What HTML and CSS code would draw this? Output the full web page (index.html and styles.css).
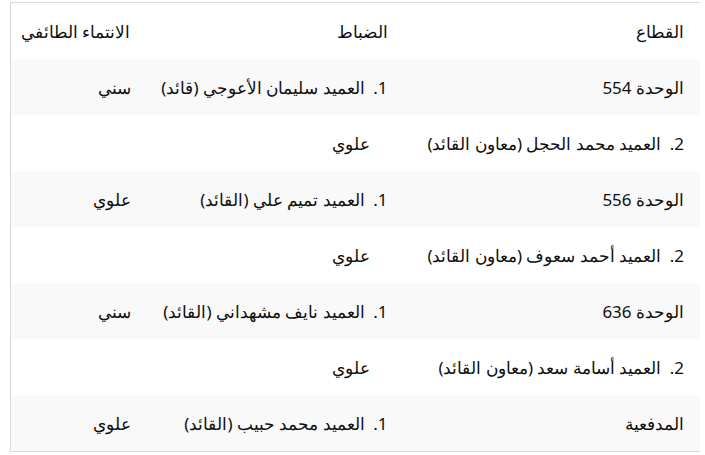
FILE: index.html
```html
<!DOCTYPE html>
<html lang="ar">
<head>
<meta charset="utf-8">
<title>جدول</title>
<link rel="stylesheet" href="styles.css">
</head>
<body>
<table class="grid" dir="rtl">
  <colgroup>
    <col class="c1"><col class="c2"><col class="c3">
  </colgroup>
  <thead>
    <tr><th>القطاع</th><th>الضباط</th><th>الانتماء الطائفي</th></tr>
  </thead>
  <tbody>
    <tr><td>الوحدة 554</td><td><span class="num">1.</span> العميد سليمان الأعوجي (قائد)</td><td>سني</td></tr>
    <tr><td><span class="num">2.</span> العميد محمد الحجل (معاون القائد)</td><td class="shift">علوي</td><td></td></tr>
    <tr><td>الوحدة 556</td><td><span class="num">1.</span> العميد تميم علي (القائد)</td><td>علوي</td></tr>
    <tr><td><span class="num">2.</span> العميد أحمد سعوف (معاون القائد)</td><td class="shift">علوي</td><td></td></tr>
    <tr><td>الوحدة 636</td><td><span class="num">1.</span> العميد نايف مشهداني (القائد)</td><td>سني</td></tr>
    <tr><td><span class="num">2.</span> العميد أسامة سعد (معاون القائد)</td><td class="shift">علوي</td><td></td></tr>
    <tr><td>المدفعية</td><td><span class="num">1.</span> العميد محمد حبيب (القائد)</td><td>علوي</td></tr>
  </tbody>
</table>
</body>
</html>
```

FILE: styles.css
```css
html, body {
  background: #ffffff;
}
body {
  margin: 2px 5px 0 10px;
  font-family: "Noto Sans", sans-serif;
  font-size: 17px;
  color: #0f0f0f;
}
.grid {
  width: 690px;
  table-layout: fixed;
  border-collapse: collapse;
  border: 1px solid #d9d9d9;
}
.grid .c1 { width: 297px; }
.grid .c2 { width: 257px; }
.grid .c3 { width: 136px; }
.grid th,
.grid td {
  text-align: right;
  font-weight: normal;
  padding: 0 16px;
  white-space: nowrap;
  height: 56px;
}
.grid tbody tr:nth-child(odd) {
  background: #f9f9f9;
}
.grid td.shift {
  padding-right: 34px;
}
.num {
  margin-left: 4px;
}
```
